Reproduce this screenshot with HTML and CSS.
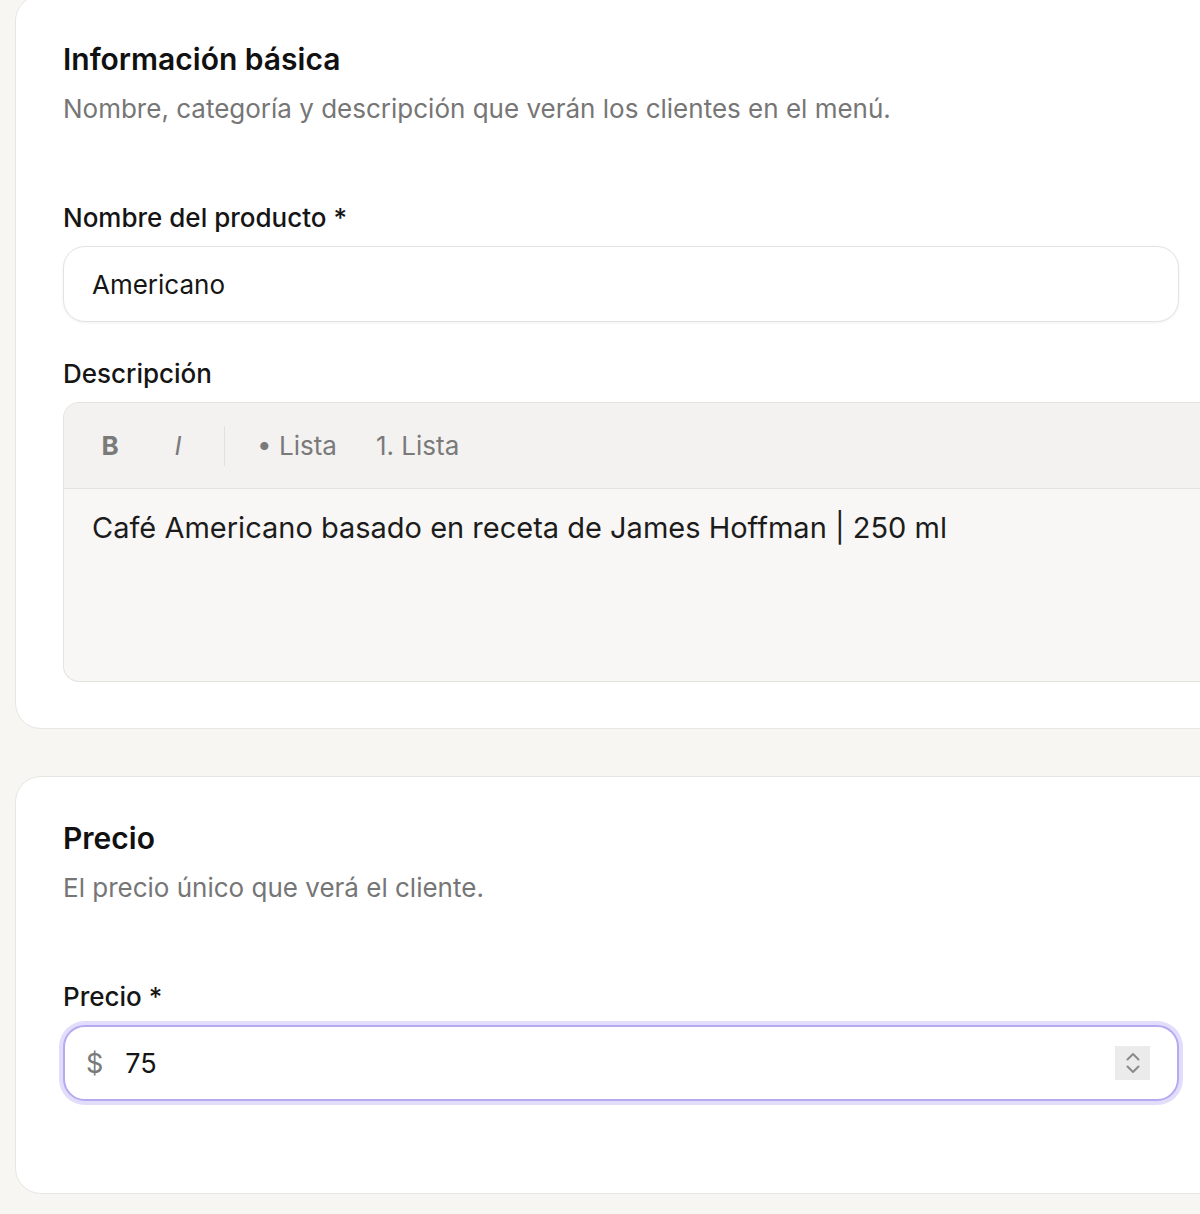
FILE: index.html
```html
<!DOCTYPE html>
<html lang="es">
<head>
    <meta charset="UTF-8">
    <meta name="viewport" content="width=device-width, initial-scale=1.0">
    <title>Editar producto</title>
    <link rel="stylesheet" href="styles.css">
</head>
<body>
    <main class="page">
        <section class="card">
            <div class="card-header">
                <h2 class="card-title">Información básica</h2>
                <p class="card-subtitle">Nombre, categoría y descripción que verán los clientes en el menú.</p>
            </div>

            <div class="field">
                <label class="field-label" for="name">Nombre del producto *</label>
                <input id="name" class="text-input" type="text" value="Americano">
            </div>

            <div class="field">
                <label class="field-label">Descripción</label>
                <div class="editor">
                    <div class="editor-toolbar">
                        <button class="tool-btn tool-bold">B</button>
                        <button class="tool-btn tool-italic">I</button>
                        <span class="tool-divider"></span>
                        <button class="tool-btn tool-list">• Lista</button>
                        <button class="tool-btn tool-list">1. Lista</button>
                    </div>
                    <div class="editor-body">Café Americano basado en receta de James Hoffman | 250 ml</div>
                </div>
            </div>
        </section>

        <section class="card card-price">
            <div class="card-header">
                <h2 class="card-title">Precio</h2>
                <p class="card-subtitle">El precio único que verá el cliente.</p>
            </div>

            <div class="field">
                <label class="field-label" for="price">Precio *</label>
                <div class="price-input">
                    <span class="currency">$</span>
                    <span class="price-value">75</span>
                    <span class="stepper">
                        <svg width="16" height="28" viewBox="0 0 16 28" fill="none" stroke="#8a8a8a" stroke-width="2" stroke-linecap="round" stroke-linejoin="round">
                            <path d="M2.5 10.5 L8 5 L13.5 10.5"/>
                            <path d="M2.5 17.5 L8 23 L13.5 17.5"/>
                        </svg>
                    </span>
                </div>
            </div>
        </section>
    </main>
</body>
</html>
```

FILE: styles.css
```css
:root {
    --page-bg: #f7f6f3;
    --card-bg: #ffffff;
    --card-border: #e7e6e2;
    --text-main: #151515;
    --text-muted: #767676;
    --toolbar-bg: #f3f2f0;
    --editor-bg: #f8f7f5;
    --focus-border: #b5aaf2;
    --focus-ring: rgba(178, 166, 245, 0.38);
}

html, body {
    margin: 0;
    padding: 0;
    overflow: hidden;
}

body {
    font-family: Inter, "Noto Sans", sans-serif;
    background: var(--page-bg);
    color: var(--text-main);
}

.page {
    width: 1260px;
    margin-top: -5px;
    padding-left: 15px;
    display: flex;
    flex-direction: column;
    gap: 47px;
}

.card {
    background: var(--card-bg);
    border: 1px solid var(--card-border);
    border-radius: 26px;
    padding: 45px 0 46px 47px;
}

.card-price {
    padding-top: 43px;
    padding-bottom: 92px;
}

.card-header {
    margin-bottom: 77px;
}

.card-title {
    margin: 0;
    font-size: 30px;
    line-height: 36px;
    font-weight: 600;
    color: #111;
}

.card-subtitle {
    margin: 16px 0 0;
    font-size: 26px;
    line-height: 32px;
    color: var(--text-muted);
}

.field + .field {
    margin-top: 36px;
}

.field-label {
    display: block;
    margin-bottom: 12px;
    font-size: 26px;
    line-height: 32px;
    font-weight: 500;
    color: var(--text-main);
}

.text-input {
    box-sizing: border-box;
    display: block;
    width: 1116px;
    height: 76px;
    padding: 0 28px;
    border: 1px solid #e4e3e0;
    border-radius: 22px;
    background: #fff;
    box-shadow: 0 1px 3px rgba(0, 0, 0, 0.06);
    font-family: inherit;
    font-size: 26px;
    color: var(--text-main);
    outline: none;
}

.editor {
    border: 1px solid #e4e3e0;
    border-right: none;
    border-radius: 16px 0 0 16px;
    overflow: hidden;
    background: var(--editor-bg);
}

.editor-toolbar {
    display: flex;
    align-items: center;
    height: 85px;
    padding-left: 22px;
    background: var(--toolbar-bg);
    border-bottom: 1px solid #e4e3e0;
}

.tool-btn {
    background: none;
    border: none;
    padding: 0;
    font-family: inherit;
    font-size: 26px;
    color: #7a7a7a;
    cursor: pointer;
}

.tool-bold {
    width: 48px;
    font-weight: 700;
}

.tool-italic {
    width: 48px;
    margin-left: 20px;
    font-style: italic;
}

.tool-divider {
    width: 1px;
    height: 40px;
    margin: 0 22px;
    background: #e2e1de;
}

.tool-list {
    padding: 0 10px;
}

.tool-list + .tool-list {
    margin-left: 19px;
}

.editor-body {
    height: 152px;
    padding: 20px 28px;
    font-size: 29px;
    line-height: 38px;
    color: #1c1c1c;
}

.price-input {
    box-sizing: border-box;
    display: flex;
    align-items: center;
    width: 1116px;
    height: 76px;
    padding: 0 27px 0 21px;
    border: 2px solid var(--focus-border);
    border-radius: 22px;
    background: #fff;
    box-shadow: 0 0 0 4px var(--focus-ring);
}

.currency {
    font-size: 27px;
    color: #7a7a7a;
}

.price-value {
    flex: 1;
    margin-left: 22px;
    font-size: 27px;
    color: var(--text-main);
}

.stepper {
    display: flex;
    align-items: center;
    justify-content: center;
    width: 35px;
    height: 34px;
    background: #ebebeb;
}
```
